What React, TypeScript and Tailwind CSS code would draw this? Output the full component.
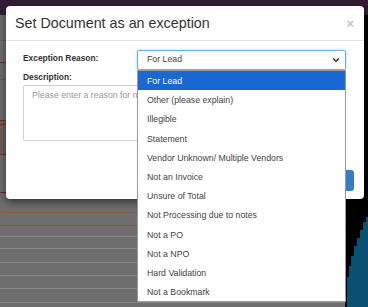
import { ChevronDown } from 'lucide-react';

const reasons = [
  'For Lead',
  'Other (please explain)',
  'Illegible',
  'Statement',
  'Vendor Unknown/ Multiple Vendors',
  'Not an Invoice',
  'Unsure of Total',
  'Not Processing due to notes',
  'Not a PO',
  'Not a NPO',
  'Hard Validation',
  'Not a Bookmark',
];

// page rows peeking out behind the modal
const rows = [
  { h: 'h-[26px]', line: 'border-[#5e5e5e]' },
  { h: 'h-[22px]', line: 'border-[#7a2b22]' },
  { h: 'h-[17px]', line: 'border-[#5e5e5e]' },
  { h: 'h-[41px]', line: 'border-[#7a2b22]' },
  { h: 'h-[4px]', line: 'border-[#7a2b22] bg-[#725f5c]' },
  { h: 'h-[30px]', line: 'border-[#7a2b22] bg-[#715e5b]' },
  { h: 'h-[38px]', line: 'border-[#7a2b22]' },
  { h: 'h-[20px]', line: 'border-dotted border-[#a3441f]' },
  { h: 'h-[13px]', line: 'border-dotted border-[#a3441f]' },
  { h: 'h-[11px]', line: 'border-[#858585]' },
  { h: 'h-[12px]', line: 'border-[#858585]' },
  { h: 'h-[14px]', line: 'border-[#858585]' },
  { h: 'h-[13px]', line: 'border-[#858585]' },
  { h: 'h-[13px]', line: 'border-[#858585]' },
  { h: 'h-[14px]', line: 'border-[#858585]' },
];

export default function App() {
  return (
    <div className="relative h-[307px] w-[368px] overflow-hidden bg-[#6e6e6e] font-['Liberation_Sans',Arial,sans-serif]">
      <div className="h-[15px] bg-[#331c33]" />
      <div className="flex h-[292px]">
        <div className="flex flex-1 flex-col">
          {rows.map((row, i) => (
            <div key={i} className={`${row.h} border-b ${row.line}`} />
          ))}
        </div>
        <div className="w-[23px] bg-black">
          <svg width="23" height="292" viewBox="0 0 23 292">
            <path
              d="M23 202 L21 202 L21 207 L18 207 L18 215 L15 215 L15 223 L12 223 L12 231 L9 231 L9 241 L6 241 L6 251 L4 251 L4 262 L2 262 L2 292 L23 292 Z"
              fill="#0b5071"
            />
          </svg>
        </div>
      </div>

      <div className="absolute left-[6px] top-[6px] flex h-[193px] w-[358px] flex-col rounded-[4px] bg-white shadow-[0_3px_9px_rgba(0,0,0,0.55)]">
        <div className="flex h-[35px] shrink-0 items-center justify-between border-b border-[#e5e5e5] pl-[9px] pr-[10px]">
          <h1 className="text-[14.3px] leading-none text-[#333]">Set Document as an exception</h1>
          <span className="text-[13px] font-bold leading-none text-[#c4c4c4]">×</span>
        </div>

        <div className="pl-[17px] pr-[18px] pt-[9px]">
          <div className="flex items-start">
            <label className="w-[114px] pt-[1px] text-[8.4px] font-bold leading-[14px] text-[#333]">
              Exception Reason:
            </label>
            <div className="flex h-[20px] flex-1 items-center justify-between rounded-[2px] border border-[#66afe9] pl-[9px] pr-[4px] shadow-[0_0_3px_rgba(102,175,233,0.6)]">
              <span className="text-[8.75px] text-[#444]">For Lead</span>
              <ChevronDown size={10} strokeWidth={3.5} className="text-[#333]" />
            </div>
          </div>
          <label className="block text-[8.4px] font-bold leading-[14px] text-[#333]">Description:</label>
          <div className="mt-[1px] h-[56px] rounded-[2px] border border-[#d0d0d0] px-[8px] pt-[3px] text-[8.75px] text-[#999]">
            <span className="block w-[105px] overflow-hidden whitespace-nowrap">
              Please enter a reason for marking this document as an exception
            </span>
          </div>
        </div>

        <div className="mt-auto flex justify-end pb-[8px] pr-[10px]">
          <button className="h-[21px] w-[60px] rounded-[3px] bg-[#3a7cc3] text-[8.75px] text-white">Save</button>
        </div>
      </div>

      <ul className="absolute left-[137px] top-[70px] w-[209px] border border-[#9a9a9a] bg-white">
        {reasons.map((reason, i) => (
          <li
            key={reason}
            className={`flex h-[19.2px] items-center pl-[9px] pt-[2px] text-[8.75px] ${
              i === 0 ? 'bg-[#1a68d4] text-white' : 'text-[#444]'
            }`}
          >
            {reason}
          </li>
        ))}
      </ul>
    </div>
  );
}
